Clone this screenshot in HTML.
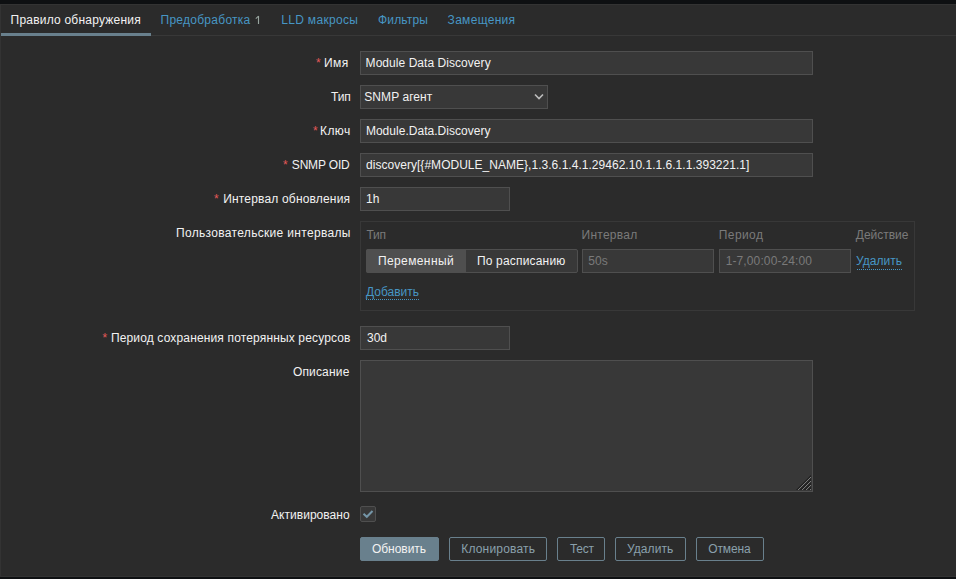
<!DOCTYPE html>
<html><head><meta charset="utf-8">
<style>
html,body{margin:0;padding:0;width:956px;height:579px;overflow:hidden;background:#0e1012;}
body{font-family:"Liberation Sans",sans-serif;font-size:12px;color:#f2f2f2;position:relative;}
div,span{box-sizing:border-box;}
.panel{position:absolute;left:0;top:4px;width:956px;height:573px;background:#2b2b2b;border-top:1px solid #333;border-left:1px solid #333;border-bottom:1px solid #333;}
.t{position:absolute;white-space:nowrap;line-height:24px;height:24px;}
.tabline{position:absolute;left:1px;top:35px;width:955px;height:1px;background:#383838;}
.tabact{position:absolute;left:1px;top:33px;width:150px;height:3px;background:#69808d;}
.l{color:#4796c4;}
.n{color:#9aa5a0;font-size:11px;}
.ast{color:#e45959;}
.box{position:absolute;background:#383838;border:1px solid #4f4f4f;}
.grey{color:#7a7a7a;}
.dots{position:absolute;height:1px;background:repeating-linear-gradient(to right,#4796c4 0 1px,transparent 1px 2px);}
.btn{position:absolute;top:537px;height:24px;border:1px solid #69808d;border-radius:2px;}
.btn.p{background:#69808d;}
.bt{color:#8aa0ac;}
</style></head>
<body>
<div class="panel"></div>
<div class="tabline"></div>
<div class="tabact"></div>

<!-- inputs -->
<div class="box" style="left:360px;top:51px;width:453px;height:24px;"></div>
<div class="box" style="left:360px;top:85px;width:188px;height:24px;"></div>
<svg style="position:absolute;left:533px;top:92px;" width="12" height="9" viewBox="0 0 12 9"><polyline points="2,2.5 6,6.5 10,2.5" fill="none" stroke="#bdbdbd" stroke-width="1.6"/></svg>
<div class="box" style="left:360px;top:119px;width:453px;height:24px;"></div>
<div class="box" style="left:360px;top:153px;width:453px;height:24px;"></div>
<div class="box" style="left:360px;top:187px;width:150px;height:24px;"></div>

<!-- custom intervals -->
<div style="position:absolute;left:360px;top:221px;width:555px;height:90px;border:1px solid #383838;"></div>
<div style="position:absolute;left:366px;top:249px;width:212px;height:24px;background:#383838;border:1px solid #4f4f4f;border-radius:2px;"></div>
<div style="position:absolute;left:366px;top:249px;width:100px;height:24px;background:#4f4f4f;border-radius:2px 0 0 2px;"></div>
<div class="box" style="left:582px;top:249px;width:132px;height:24px;"></div>
<div class="box" style="left:719px;top:249px;width:132px;height:24px;"></div>
<div class="dots" style="left:857px;top:269px;width:46px;"></div>
<div class="dots" style="left:366px;top:299px;width:54px;"></div>

<div class="box" style="left:360px;top:326px;width:150px;height:24px;"></div>
<div class="box" style="left:360px;top:360px;width:453px;height:132px;"></div>
<svg style="position:absolute;left:794px;top:473px;" width="17" height="17" shape-rendering="crispEdges"><rect x="2" y="16" width="1" height="1" fill="#2a2a2a"/><rect x="3" y="15" width="1" height="1" fill="#2a2a2a"/><rect x="3" y="16" width="1" height="1" fill="#202020"/><rect x="4" y="14" width="1" height="1" fill="#2a2a2a"/><rect x="4" y="15" width="1" height="1" fill="#202020"/><rect x="4" y="16" width="1" height="1" fill="#7c7c7c"/><rect x="5" y="13" width="1" height="1" fill="#2a2a2a"/><rect x="5" y="14" width="1" height="1" fill="#202020"/><rect x="5" y="15" width="1" height="1" fill="#7c7c7c"/><rect x="5" y="16" width="1" height="1" fill="#2c2c2c"/><rect x="6" y="12" width="1" height="1" fill="#2a2a2a"/><rect x="6" y="13" width="1" height="1" fill="#202020"/><rect x="6" y="14" width="1" height="1" fill="#7c7c7c"/><rect x="6" y="15" width="1" height="1" fill="#2c2c2c"/><rect x="6" y="16" width="1" height="1" fill="#242424"/><rect x="7" y="11" width="1" height="1" fill="#2a2a2a"/><rect x="7" y="12" width="1" height="1" fill="#202020"/><rect x="7" y="13" width="1" height="1" fill="#7c7c7c"/><rect x="7" y="14" width="1" height="1" fill="#2c2c2c"/><rect x="7" y="15" width="1" height="1" fill="#242424"/><rect x="7" y="16" width="1" height="1" fill="#1f1f1f"/><rect x="8" y="10" width="1" height="1" fill="#2a2a2a"/><rect x="8" y="11" width="1" height="1" fill="#202020"/><rect x="8" y="12" width="1" height="1" fill="#7c7c7c"/><rect x="8" y="13" width="1" height="1" fill="#2c2c2c"/><rect x="8" y="14" width="1" height="1" fill="#242424"/><rect x="8" y="15" width="1" height="1" fill="#1f1f1f"/><rect x="8" y="16" width="1" height="1" fill="#7c7c7c"/><rect x="9" y="9" width="1" height="1" fill="#2a2a2a"/><rect x="9" y="10" width="1" height="1" fill="#202020"/><rect x="9" y="11" width="1" height="1" fill="#7c7c7c"/><rect x="9" y="12" width="1" height="1" fill="#2c2c2c"/><rect x="9" y="13" width="1" height="1" fill="#242424"/><rect x="9" y="14" width="1" height="1" fill="#1f1f1f"/><rect x="9" y="15" width="1" height="1" fill="#7c7c7c"/><rect x="9" y="16" width="1" height="1" fill="#2c2c2c"/><rect x="10" y="8" width="1" height="1" fill="#2a2a2a"/><rect x="10" y="9" width="1" height="1" fill="#202020"/><rect x="10" y="10" width="1" height="1" fill="#7c7c7c"/><rect x="10" y="11" width="1" height="1" fill="#2c2c2c"/><rect x="10" y="12" width="1" height="1" fill="#242424"/><rect x="10" y="13" width="1" height="1" fill="#1f1f1f"/><rect x="10" y="14" width="1" height="1" fill="#7c7c7c"/><rect x="10" y="15" width="1" height="1" fill="#2c2c2c"/><rect x="10" y="16" width="1" height="1" fill="#242424"/><rect x="11" y="7" width="1" height="1" fill="#2a2a2a"/><rect x="11" y="8" width="1" height="1" fill="#202020"/><rect x="11" y="9" width="1" height="1" fill="#7c7c7c"/><rect x="11" y="10" width="1" height="1" fill="#2c2c2c"/><rect x="11" y="11" width="1" height="1" fill="#242424"/><rect x="11" y="12" width="1" height="1" fill="#1f1f1f"/><rect x="11" y="13" width="1" height="1" fill="#7c7c7c"/><rect x="11" y="14" width="1" height="1" fill="#2c2c2c"/><rect x="11" y="15" width="1" height="1" fill="#242424"/><rect x="11" y="16" width="1" height="1" fill="#1f1f1f"/><rect x="12" y="6" width="1" height="1" fill="#2a2a2a"/><rect x="12" y="7" width="1" height="1" fill="#202020"/><rect x="12" y="8" width="1" height="1" fill="#7c7c7c"/><rect x="12" y="9" width="1" height="1" fill="#2c2c2c"/><rect x="12" y="10" width="1" height="1" fill="#242424"/><rect x="12" y="11" width="1" height="1" fill="#1f1f1f"/><rect x="12" y="12" width="1" height="1" fill="#7c7c7c"/><rect x="12" y="13" width="1" height="1" fill="#2c2c2c"/><rect x="12" y="14" width="1" height="1" fill="#242424"/><rect x="12" y="15" width="1" height="1" fill="#1f1f1f"/><rect x="12" y="16" width="1" height="1" fill="#7c7c7c"/><rect x="13" y="5" width="1" height="1" fill="#2a2a2a"/><rect x="13" y="6" width="1" height="1" fill="#202020"/><rect x="13" y="7" width="1" height="1" fill="#7c7c7c"/><rect x="13" y="8" width="1" height="1" fill="#2c2c2c"/><rect x="13" y="9" width="1" height="1" fill="#242424"/><rect x="13" y="10" width="1" height="1" fill="#1f1f1f"/><rect x="13" y="11" width="1" height="1" fill="#7c7c7c"/><rect x="13" y="12" width="1" height="1" fill="#2c2c2c"/><rect x="13" y="13" width="1" height="1" fill="#242424"/><rect x="13" y="14" width="1" height="1" fill="#1f1f1f"/><rect x="13" y="15" width="1" height="1" fill="#7c7c7c"/><rect x="13" y="16" width="1" height="1" fill="#2c2c2c"/><rect x="14" y="4" width="1" height="1" fill="#2a2a2a"/><rect x="14" y="5" width="1" height="1" fill="#202020"/><rect x="14" y="6" width="1" height="1" fill="#7c7c7c"/><rect x="14" y="7" width="1" height="1" fill="#2c2c2c"/><rect x="14" y="8" width="1" height="1" fill="#242424"/><rect x="14" y="9" width="1" height="1" fill="#1f1f1f"/><rect x="14" y="10" width="1" height="1" fill="#7c7c7c"/><rect x="14" y="11" width="1" height="1" fill="#2c2c2c"/><rect x="14" y="12" width="1" height="1" fill="#242424"/><rect x="14" y="13" width="1" height="1" fill="#1f1f1f"/><rect x="14" y="14" width="1" height="1" fill="#7c7c7c"/><rect x="14" y="15" width="1" height="1" fill="#2c2c2c"/><rect x="14" y="16" width="1" height="1" fill="#242424"/><rect x="15" y="3" width="1" height="1" fill="#2a2a2a"/><rect x="15" y="4" width="1" height="1" fill="#202020"/><rect x="15" y="5" width="1" height="1" fill="#7c7c7c"/><rect x="15" y="6" width="1" height="1" fill="#2c2c2c"/><rect x="15" y="7" width="1" height="1" fill="#242424"/><rect x="15" y="8" width="1" height="1" fill="#1f1f1f"/><rect x="15" y="9" width="1" height="1" fill="#7c7c7c"/><rect x="15" y="10" width="1" height="1" fill="#2c2c2c"/><rect x="15" y="11" width="1" height="1" fill="#242424"/><rect x="15" y="12" width="1" height="1" fill="#1f1f1f"/><rect x="15" y="13" width="1" height="1" fill="#7c7c7c"/><rect x="15" y="14" width="1" height="1" fill="#2c2c2c"/><rect x="15" y="15" width="1" height="1" fill="#242424"/><rect x="15" y="16" width="1" height="1" fill="#1f1f1f"/><rect x="16" y="2" width="1" height="1" fill="#2a2a2a"/><rect x="16" y="3" width="1" height="1" fill="#202020"/><rect x="16" y="4" width="1" height="1" fill="#7c7c7c"/><rect x="16" y="5" width="1" height="1" fill="#2c2c2c"/><rect x="16" y="6" width="1" height="1" fill="#242424"/><rect x="16" y="7" width="1" height="1" fill="#1f1f1f"/><rect x="16" y="8" width="1" height="1" fill="#7c7c7c"/><rect x="16" y="9" width="1" height="1" fill="#2c2c2c"/><rect x="16" y="10" width="1" height="1" fill="#242424"/><rect x="16" y="11" width="1" height="1" fill="#1f1f1f"/><rect x="16" y="12" width="1" height="1" fill="#7c7c7c"/><rect x="16" y="13" width="1" height="1" fill="#2c2c2c"/><rect x="16" y="14" width="1" height="1" fill="#242424"/><rect x="16" y="15" width="1" height="1" fill="#1f1f1f"/><rect x="16" y="16" width="1" height="1" fill="#7c7c7c"/></svg>

<!-- checkbox -->
<div style="position:absolute;left:360px;top:506px;width:16px;height:16px;background:#383838;border:1px solid #4f4f4f;border-radius:2px;"></div>
<svg style="position:absolute;left:360px;top:506px;" width="16" height="16" viewBox="0 0 16 16"><polyline points="3.5,7.8 6.8,10.8 12.5,5" fill="none" stroke="#7596a8" stroke-width="2"/></svg>

<!-- buttons -->
<div class="btn p" style="left:360px;width:79px;"></div>
<div class="btn" style="left:449px;width:98px;"></div>
<div class="btn" style="left:557px;width:48px;"></div>
<div class="btn" style="left:615px;width:71px;"></div>
<div class="btn" style="left:696px;width:68px;"></div>

<svg style="position:absolute;left:254px;top:14px;" width="8" height="12" viewBox="0 0 8 12"><path d="M4.5 2V10" stroke="#98a59f" stroke-width="1.15" fill="none"/><path d="M1.8 4.6L4.6 2.2" stroke="#98a59f" stroke-width="1.1" fill="none"/></svg>
<div class="t " id="tab1" style="left:10.6px;top:8px;letter-spacing:0.211px;">Правило обнаружения</div>
<div class="t l" id="tab2" style="left:160.5px;top:8px;letter-spacing:0.267px;">Предобработка</div>
<div class="t l" id="tab3" style="left:281.2px;top:8px;letter-spacing:0.32px;">LLD макросы</div>
<div class="t l" id="tab4" style="left:378.0px;top:8px;letter-spacing:0.167px;">Фильтры</div>
<div class="t l" id="tab5" style="left:447.6px;top:8px;letter-spacing:0.3px;">Замещения</div>
<div class="t ast" id="a1" style="left:316.0px;top:51px;">*</div>
<div class="t " id="lb1" style="left:324.0px;top:51px;letter-spacing:0.45px;">Имя</div>
<div class="t " id="lb2" style="left:331.1px;top:85px;letter-spacing:-0.2px;">Тип</div>
<div class="t ast" id="a3" style="left:313.0px;top:119px;">*</div>
<div class="t " id="lb3" style="left:320.0px;top:119px;letter-spacing:0.4px;">Ключ</div>
<div class="t ast" id="a4" style="left:283.1px;top:153px;">*</div>
<div class="t " id="lb4" style="left:291.8px;top:153px;letter-spacing:-0.171px;">SNMP OID</div>
<div class="t ast" id="a5" style="left:214.1px;top:187px;">*</div>
<div class="t " id="lb5" style="left:223.2px;top:187px;letter-spacing:0.178px;">Интервал обновления</div>
<div class="t " id="lb6" style="left:176.0px;top:221px;letter-spacing:0.32px;">Пользовательские интервалы</div>
<div class="t ast" id="a7" style="left:102.5px;top:326px;">*</div>
<div class="t " id="lb7" style="left:110.9px;top:326px;letter-spacing:0.15px;">Период сохранения потерянных ресурсов</div>
<div class="t " id="lb8" style="left:292.9px;top:360px;letter-spacing:0.171px;">Описание</div>
<div class="t " id="lb9" style="left:271.0px;top:503px;letter-spacing:0.037px;">Активировано</div>
<div class="t " id="in1" style="left:365.6px;top:51px;letter-spacing:0.05px;">Module Data Discovery</div>
<div class="t " id="in2" style="left:364.3px;top:85px;letter-spacing:0.067px;">SNMP агент</div>
<div class="t " id="in3" style="left:365.9px;top:119px;letter-spacing:0.03px;">Module.Data.Discovery</div>
<div class="t " id="in4" style="left:366.1px;top:153px;letter-spacing:0.026px;">discovery[{#MODULE_NAME},1.3.6.1.4.1.29462.10.1.1.6.1.1.393221.1]</div>
<div class="t " id="in5" style="left:366.0px;top:187px;">1h</div>
<div class="t grey" id="h1" style="left:366.5px;top:223px;letter-spacing:-0.2px;">Тип</div>
<div class="t grey" id="h2" style="left:581.5px;top:223px;letter-spacing:0.258px;">Интервал</div>
<div class="t grey" id="h3" style="left:718.8px;top:223px;letter-spacing:0.4px;">Период</div>
<div class="t grey" id="h4" style="left:855.8px;top:223px;letter-spacing:-0.028px;">Действие</div>
<div class="t " id="seg1" style="left:377.9px;top:249px;letter-spacing:0.4px;">Переменный</div>
<div class="t " id="seg2" style="left:476.9px;top:249px;letter-spacing:0.183px;">По расписанию</div>
<div class="t grey" id="in6" style="left:588.2px;top:249px;letter-spacing:0.1px;">50s</div>
<div class="t grey" id="in7" style="left:725.7px;top:249px;letter-spacing:0.114px;">1-7,00:00-24:00</div>
<div class="t l" id="del" style="left:856.0px;top:249px;letter-spacing:0.033px;">Удалить</div>
<div class="t l" id="add" style="left:365.9px;top:280px;letter-spacing:0.029px;">Добавить</div>
<div class="t " id="in8" style="left:367.0px;top:326px;">30d</div>
<div class="t " id="b1" style="left:371.9px;top:537px;letter-spacing:-0.028px;">Обновить</div>
<div class="t bt" id="b2" style="left:461.2px;top:537px;letter-spacing:0.2px;">Клонировать</div>
<div class="t bt" id="b3" style="left:569.9px;top:537px;letter-spacing:-0.2px;">Тест</div>
<div class="t bt" id="b4" style="left:627.0px;top:537px;letter-spacing:0.067px;">Удалить</div>
<div class="t bt" id="b5" style="left:708.3px;top:537px;letter-spacing:-0.16px;">Отмена</div>
</body></html>
